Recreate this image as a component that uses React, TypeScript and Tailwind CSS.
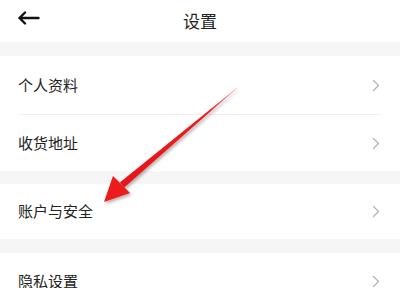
import React from 'react';

const rows = [
  { label: '个人资料', h: 'h-[58px]' },
  { label: '收货地址', h: 'h-[56px]' },
];

function Chevron() {
  return (
    <svg width="8" height="13" viewBox="0 0 8 13" fill="none">
      <path d="M1.5 1.5L6.5 6.5L1.5 11.5" stroke="#b3b3b3" strokeWidth="1.3" strokeLinecap="round" strokeLinejoin="round" />
    </svg>
  );
}

function Row({ label, h }: { label: string; h: string }) {
  return (
    <div className={`flex ${h} items-center justify-between bg-white pl-[18px] pr-[20px]`}>
      <span className="text-[15px] text-[#222]">{label}</span>
      <Chevron />
    </div>
  );
}

function Gap({ h }: { h: string }) {
  return <div className={`${h} bg-[#f6f6f6]`} />;
}

export default function App() {
  return (
    <div
      className="relative h-[288px] w-[400px] overflow-hidden bg-white"
      style={{ fontFamily: '"Noto Sans CJK SC", "Noto Sans", sans-serif' }}
    >
      {/* Header */}
      <div className="relative flex h-[42px] items-center justify-center bg-white">
        <svg className="absolute left-[17px] top-[11px]" width="23" height="14" viewBox="0 0 23 14" fill="none">
          <path d="M21.5 7H2.5M8 1.5L2.5 7L8 12.5" stroke="#111" strokeWidth="2.4" strokeLinecap="round" strokeLinejoin="round" />
        </svg>
        <span className="text-[17px] text-[#222]">设置</span>
      </div>

      <Gap h="h-[14px]" />
      <Row {...rows[0]} />
      <div className="mx-[18px] h-px bg-[#efefef]" />
      <Row {...rows[1]} />
      <Gap h="h-[13px]" />
      <Row label="账户与安全" h="h-[55px]" />
      <Gap h="h-[14px]" />
      <Row label="隐私设置" h="h-[56px]" />

      {/* Red annotation arrow */}
      <svg className="pointer-events-none absolute left-0 top-0" width="400" height="288" viewBox="0 0 400 288">
        <defs>
          <linearGradient id="shaft" x1="237" y1="88" x2="122" y2="185" gradientUnits="userSpaceOnUse">
            <stop offset="0" stopColor="#f7a0a0" />
            <stop offset="0.25" stopColor="#e82020" />
            <stop offset="1" stopColor="#e8141c" />
          </linearGradient>
          <filter id="sh" x="-20%" y="-20%" width="140%" height="140%">
            <feDropShadow dx="1.5" dy="2" stdDeviation="1.5" floodColor="#000" floodOpacity="0.3" />
          </filter>
        </defs>
        <g filter="url(#sh)">
          <polygon points="237.3,87.6 236.7,88.4 124.2,187.6 119.8,182.4" fill="url(#shaft)" />
          <polygon points="104,202 113,176 130,193" fill="#ec1a1f" />
        </g>
      </svg>
    </div>
  );
}
